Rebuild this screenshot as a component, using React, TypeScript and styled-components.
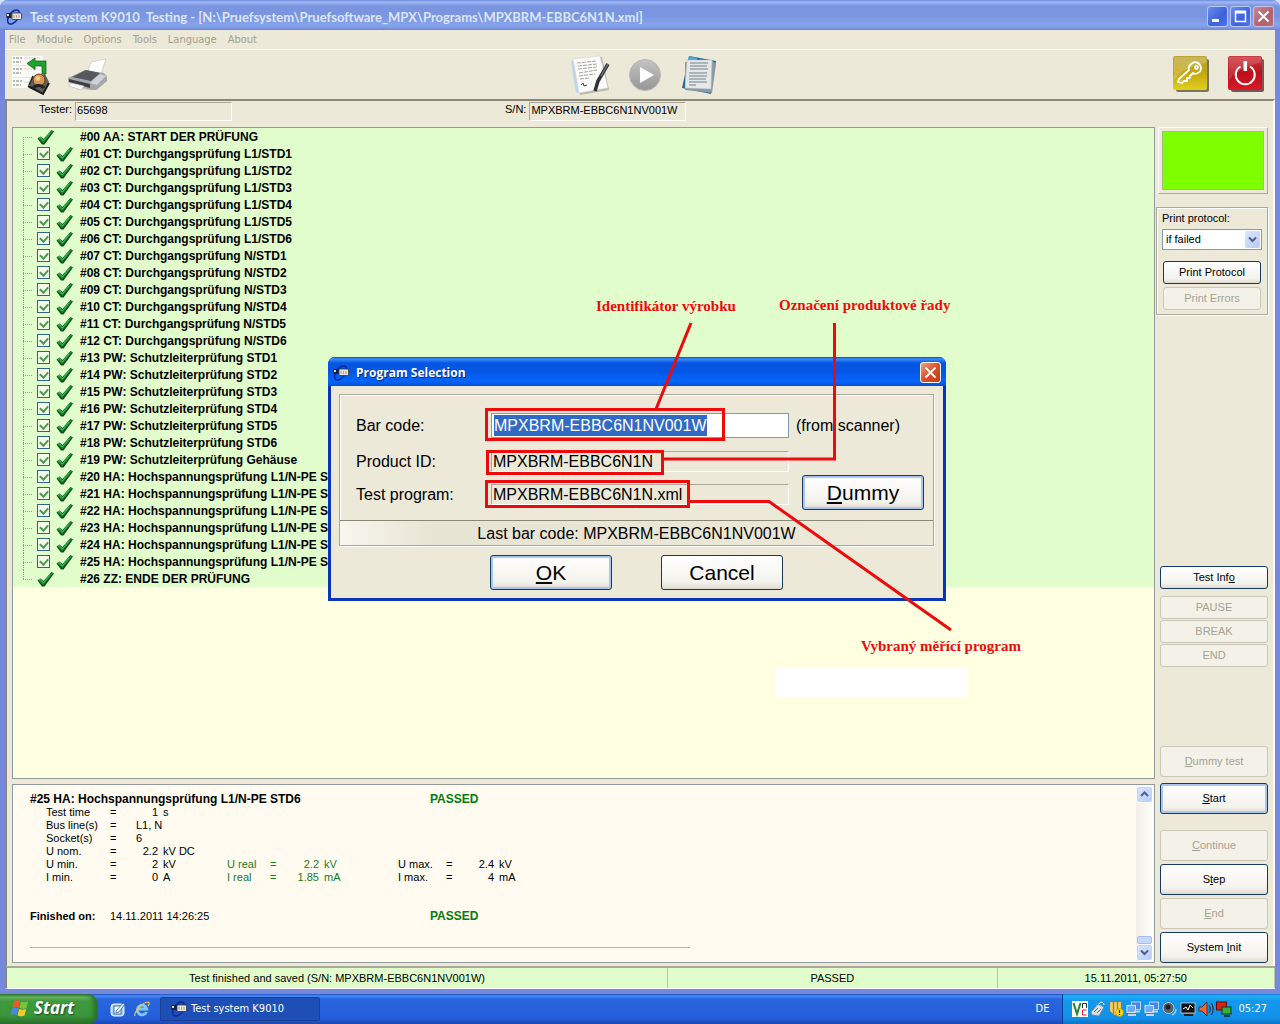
import React from "react";
import styled, { createGlobalStyle, css } from "styled-components";

const sans = `"Liberation Sans", Arial, sans-serif`;
const tahoma = `"DejaVu Sans Condensed", "DejaVu Sans", Tahoma, sans-serif`;
const trebuchet = `"Open Sans", "Noto Sans", sans-serif`;

const GlobalStyle = createGlobalStyle`
  * { box-sizing: border-box; }
  body { margin: 0; background: #ece9d8; font: 11px/13px ${sans}; color: #000; }
  button, input, select { font: inherit; color: inherit; margin: 0; }
`;

/* ---------- shell ---------- */

const Screen = styled.div`
  position: relative;
  display: flex;
  flex-direction: column;
  min-height: 100vh;
  background: #d5e0f5;
`;

const AppWindow = styled.main`
  flex: 1;
  display: flex;
  flex-direction: column;
  border: solid #7489dc;
  border-width: 0 5px 5px;
  border-radius: 8px 8px 0 0;
  background: #ece9d8;
`;

const TitleBar = styled.header`
  display: flex;
  align-items: center;
  height: 30px;
  margin: 0 -5px;
  padding: 3px 6px 0;
  border-radius: 8px 8px 0 0;
  background: linear-gradient(#6c8ce0 0, #a0b8f4 2px, #7b96e0 6px, #7a95e0 16px, #86a4ec 25px, #7c97e4 28px, #6d83d4 30px);
`;

const Title = styled.h1`
  flex: 1;
  margin: 0 0 0 8px;
  font: 700 13px/18px Lato, ${trebuchet};
  color: #dbe5fb;
  white-space: pre;
`;

const CaptionButtons = styled.div`
  display: flex;
  gap: 2px;
`;

const CaptionButton = styled.button<{ $tone: "dim" | "dimRed" | "red" }>`
  display: grid;
  place-items: center;
  width: 21px;
  height: 21px;
  padding: 0;
  border: 1px solid #fff;
  border-radius: 3px;
  ${(p) =>
    p.$tone === "dim" &&
    css`
      border-color: #b9c8f2;
      background: linear-gradient(135deg, #6d8bea, #3c62dc 60%, #4c74ee);
    `}
  ${(p) =>
    p.$tone === "dimRed" &&
    css`
      border-color: #c9c2e6;
      background: linear-gradient(135deg, #c48a96, #b2606c 60%, #b96d78);
    `}
  ${(p) =>
    p.$tone === "red" &&
    css`
      background: linear-gradient(135deg, #f0a184, #dc4f2c 50%, #c43a14);
    `}
`;

const MenuBar = styled.nav`
  display: flex;
  gap: 11px;
  height: 20px;
  padding: 3px 4px 0;
  border-bottom: 1px solid #fff;
`;

const MenuItem = styled.a`
  font: 11px/13px ${tahoma};
  color: #a39f8e;
  text-decoration: none;
`;

const Toolbar = styled.div`
  display: grid;
  grid-template-columns: 1fr auto 1fr;
  align-items: center;
  height: 49px;
  padding: 0 10px 0 6px;
`;

const ToolGroup = styled.div<{ $gap: number; $align?: "center" | "end" }>`
  display: flex;
  align-items: center;
  justify-content: ${(p) => (p.$align === "end" ? "flex-end" : "flex-start")};
  gap: ${(p) => p.$gap}px;
  padding-left: ${(p) => (p.$align === "center" ? 12 : 0)}px;
`;

const ToolButton = styled.button`
  display: block;
  padding: 0;
  border: 0;
  background: none;
  svg { display: block; }
`;

const Client = styled.div`
  flex: 1;
  display: flex;
  flex-direction: column;
  border: solid #8a8776;
  border-width: 2px 0 0 2px;
  border-right: 2px solid #fff;
`;

const InfoRow = styled.div`
  display: grid;
  grid-template-columns: 466px 1fr;
  height: 26px;
  padding: 1px 0 0 32px;
`;

const InfoField = styled.label`
  display: flex;
  gap: 3px;
  line-height: 15px;
`;

const ReadOnly = styled.input<{ $width: string; $compact?: boolean }>`
  width: ${(p) => p.$width};
  height: ${(p) => (p.$compact ? 19 : 21)}px;
  padding: 0 0 ${(p) => (p.$compact ? 3 : 0)}px 1px;
  border: 1px solid;
  border-color: #aca899 #fff #fff #aca899;
  background: transparent;
  outline: 0;
`;

const Body = styled.div`
  flex: 1;
  display: flex;
  gap: 1px;
  padding: 0 5px 3px;
`;

const LeftColumn = styled.div`
  flex: 1;
  min-width: 0;
  display: flex;
  flex-direction: column;
  gap: 5px;
`;

const TreePanel = styled.section`
  flex: 1;
  border: 1px solid #919b9c;
  background: #ffffe1;
`;

const Tree = styled.ul`
  margin: 0;
  padding: 0;
  list-style: none;
  background: #e1fdcb;
`;

const TreeRow = styled.li`
  display: flex;
  align-items: center;
  height: 17px;
  padding-left: 10px;
`;

const StepLabel = styled.span`
  padding-top: 2px;
  font: 700 12px/15px ${sans};
  white-space: pre;
`;

const Branch = styled.svg`
  flex: none;
  width: 14px;
  height: 17px;
`;

const CheckSlot = styled.span`
  flex: none;
  display: flex;
  align-items: center;
  gap: 6px;
  width: 43px;
`;

const TickBox = styled.input`
  appearance: none;
  display: grid;
  place-items: center;
  width: 13px;
  height: 13px;
  border: 1px solid #33638c;
  background: #f2f8ea;
  &:checked::after {
    content: "";
    width: 4px;
    height: 6px;
    margin-bottom: 2px;
    border: solid #4a9a4a;
    border-width: 0 2px 2px 0;
    transform: rotate(42deg);
  }
`;

const LogPanel = styled.section`
  display: flex;
  height: 179px;
  border: 1px solid #919b9c;
  background: #fffbf0;
`;

const LogText = styled.div`
  flex: 1;
  padding: 8px 17px 0;
`;

const LogHeading = styled.div<{ $spaced?: boolean }>`
  display: grid;
  grid-template-columns: 80px 320px 1fr;
  margin-top: ${(p) => (p.$spaced ? 26 : 0)}px;
  line-height: 13px;
`;

const LogTitle = styled.strong<{ $span?: boolean; $pass?: boolean }>`
  grid-column: ${(p) => (p.$span ? "span 2" : "auto")};
  font-size: ${(p) => (p.$span || p.$pass ? 12 : 11)}px;
  color: ${(p) => (p.$pass ? "#0a7a0a" : "#000")};
  white-space: nowrap;
`;

const LogTable = styled.table`
  margin-left: 16px;
  width: 500px;
  table-layout: fixed;
  border-collapse: collapse;
`;

const Cell = styled.td<{ $right?: boolean; $unit?: boolean; $green?: boolean }>`
  padding: 0 0 0 ${(p) => (p.$unit ? 5 : 0)}px;
  height: 13px;
  line-height: 13px;
  text-align: ${(p) => (p.$right ? "right" : "left")};
  color: ${(p) => (p.$green ? "#1d7a1d" : "#000")};
  white-space: nowrap;
`;

const Rule = styled.hr`
  width: 660px;
  max-width: 100%;
  margin: 24px 0 0;
  border: 0;
  border-top: 1px solid #b8b4a8;
`;

const ScrollBar = styled.div`
  display: flex;
  flex-direction: column;
  width: 17px;
  margin: 1px;
  background: linear-gradient(90deg, #f0eee6, #fefefb);
`;

const ScrollButton = styled.button`
  display: grid;
  place-items: center;
  height: 17px;
  padding: 0;
  border: 1px solid #fff;
  border-radius: 3px;
  background: linear-gradient(135deg, #dbe6fe, #b6caf8);
  box-shadow: inset 0 0 0 1px #c3d3fd;
`;

const ScrollThumb = styled.div`
  height: 8px;
  margin: auto 1px 0;
  border: 1px solid #a9bdf0;
  border-radius: 2px;
  background: #c6d6fc;
`;

/* ---------- right column ---------- */

const SideColumn = styled.aside`
  display: flex;
  flex-direction: column;
  width: 112px;
`;

const LampFrame = styled.div`
  height: 67px;
  margin-left: 2px;
  padding: 3px;
  border: 1px solid;
  border-color: #fff #aca899 #aca899 #fff;
`;

const Lamp = styled.div`
  height: 100%;
  border: 1px solid #9fbf7a;
  background: #7dff00;
`;

const PrintGroup = styled.fieldset`
  display: flex;
  flex-direction: column;
  margin: 13px 0 0;
  padding: 4px 5px;
  border: 1px solid #aca899;
  box-shadow: inset 1px 1px #fff, 1px 1px #fff;
  min-width: 0;
`;

const SelectWrap = styled.div`
  position: relative;
  margin: 4px 0 11px;
`;

const Select = styled.select`
  appearance: none;
  display: block;
  width: 100%;
  height: 21px;
  padding: 0 3px;
  border: 1px solid #7f9db9;
  border-radius: 0;
  background: #fff;
`;

const SelectArrow = styled.span`
  position: absolute;
  top: 2px;
  right: 2px;
  bottom: 2px;
  width: 15px;
  display: grid;
  place-items: center;
  border-radius: 2px;
  background: linear-gradient(135deg, #dbe6fe, #b6caf8);
  pointer-events: none;
`;

const Button = styled.button<{ $height: number; $focus?: boolean; $large?: boolean }>`
  height: ${(p) => p.$height}px;
  padding: 0;
  border: 1px solid #163a5f;
  border-radius: 3px;
  background: linear-gradient(#fff, #f3f2ec 80%, #dedad0);
  white-space: nowrap;
  ${(p) =>
    p.$focus &&
    css`
      box-shadow: inset 0 0 0 2px #a9c5f2;
    `}
  ${(p) =>
    p.$large &&
    css`
      width: 122px;
      font-size: 21px;
    `}
  &:disabled {
    border-color: #cbc8b9;
    background: #f4f2e8;
    color: #a5a293;
  }
`;

const Stack = styled.div<{ $gap: number; $top?: number | "auto"; $bottom?: number; $inset?: string }>`
  display: flex;
  flex-direction: column;
  gap: ${(p) => p.$gap}px;
  margin-top: ${(p) => (p.$top === "auto" ? "auto" : `${p.$top ?? 0}px`)};
  margin-bottom: ${(p) => p.$bottom ?? 0}px;
  padding: ${(p) => p.$inset ?? "0"};
`;

const StatusBar = styled.footer`
  display: grid;
  grid-template-columns: 660fr 329fr 277fr;
  height: 23px;
  border-top: 2px solid #aca899;
  border-left: 2px solid #8a8776;
  border-bottom: 1px solid #fff;
`;

const StatusCell = styled.div`
  border-right: 1px solid #b5c9a2;
  background: #e1fdcb;
  line-height: 20px;
  text-align: center;
`;

/* ---------- taskbar ---------- */

const Taskbar = styled.nav`
  display: flex;
  height: 30px;
  background: linear-gradient(#1f4fc0 0, #4a8cf6 2px, #2a66e0 5px, #245edb 24px, #1c48b4 30px);
  color: #fff;
  font: 11px/14px ${tahoma};
`;

const StartButton = styled.button`
  display: flex;
  align-items: center;
  gap: 4px;
  width: 98px;
  padding: 0 0 2px 10px;
  border: 0;
  border-radius: 0 10px 10px 0;
  background: linear-gradient(#2f7a2d 0, #6cb866 3px, #3f9a3d 7px, #3a943a 22px, #2a702a 30px);
  box-shadow: inset -4px 0 5px #2a6f2a;
  color: #fff;
  font: italic 700 17px/22px ${trebuchet};
  text-shadow: 1px 1px 2px #1c4a1c;
`;

const QuickLaunch = styled.div`
  display: flex;
  align-items: center;
  gap: 8px;
  width: 62px;
  padding-left: 12px;
`;

const TaskButton = styled.button`
  display: flex;
  align-items: center;
  gap: 4px;
  width: 160px;
  margin: 3px auto 3px 0;
  padding: 0 10px;
  border: 1px solid #173f94;
  border-radius: 2px;
  background: #1e4fb6;
  color: #fff;
`;

const Language = styled.span`
  padding: 8px 13px 0;
`;

const Tray = styled.div`
  display: flex;
  align-items: center;
  gap: 2px;
  padding: 0 13px 0 9px;
  border-left: 1px solid #0d3c94;
  background: linear-gradient(#1478d8 0, #22b0f4 2px, #129aee 6px, #1290e8 24px, #0f72c4 30px);
`;

const Clock = styled.time`
  margin-left: 4px;
`;

/* ---------- dialog ---------- */

const Dialog = styled.section`
  position: absolute;
  top: 357px;
  left: 328px;
  width: 618px;
  border: solid #0a35b8;
  border-width: 0 3px 3px;
  border-radius: 7px 7px 0 0;
  background: #ece9d8;
`;

const DialogTitle = styled.header`
  display: flex;
  align-items: center;
  height: 29px;
  margin: 0 -3px;
  padding: 2px 5px 0;
  border-radius: 7px 7px 0 0;
  background: linear-gradient(#0a48cc 0, #3c8cff 2px, #0657e0 6px, #0455e4 14px, #0364fc 24px, #0450d8 29px);
`;

const DialogName = styled.h2`
  flex: 1;
  margin: 0 0 0 7px;
  font: 700 12px/16px ${trebuchet};
  color: #fff;
  text-shadow: 1px 1px #0a2a80;
`;

const DialogBody = styled.form`
  padding: 8px 9px 8px 8px;
  font: 16px/20px ${sans};
`;

const GroupFrame = styled.div`
  border: 1px solid #aca899;
  box-shadow: 1px 1px #fff, inset 1px 1px #fff;
`;

const Fields = styled.div`
  display: flex;
  gap: 7px;
  padding: 17px 9px 10px 16px;
`;

const FieldGrid = styled.div`
  display: grid;
  grid-template-columns: 135px 298px;
  grid-template-rows: 27px 21px 21px;
  row-gap: 12px;
  align-items: center;
  padding-bottom: 5px;
`;

const BarCode = styled.div`
  height: 25px;
  padding: 1px 2px;
  border: 1px solid #7f9db9;
  background: #fff;
`;

const BarCodeInput = styled.input`
  display: block;
  width: 213px;
  height: 21px;
  padding: 0;
  border: 0;
  outline: 0;
  background: #316ac5;
  color: #fff;
`;

const FieldSide = styled.div`
  flex: 1;
  display: flex;
  flex-direction: column;
  justify-content: space-between;
  align-items: flex-end;
`;

const Hint = styled.span`
  align-self: flex-start;
  line-height: 27px;
`;

const LastCode = styled.div`
  height: 25px;
  border-top: 1px solid #8a8776;
  background: linear-gradient(90deg, #f8f6ee, #e8e4d3 16%, #ece9d8);
  line-height: 25px;
  text-align: center;
`;

const DialogActions = styled.div`
  display: flex;
  justify-content: center;
  gap: 49px;
  padding-top: 9px;
`;

/* ---------- annotations ---------- */

const Callouts = styled.svg`
  position: absolute;
  top: 0;
  left: 0;
  pointer-events: none;
`;

const Note = styled.p<{ $x: number; $y: number }>`
  position: absolute;
  left: ${(p) => p.$x}px;
  top: ${(p) => p.$y}px;
  margin: 0;
  font: 700 15px/18px "Liberation Serif", "Times New Roman", serif;
  color: #ee0a0a;
  white-space: nowrap;
`;

const Patch = styled.div`
  position: absolute;
  left: 776px;
  top: 667px;
  width: 192px;
  height: 30px;
  background: #fff;
`;

/* ---------- icons ---------- */

const AppIcon = () => (
  <svg width="16" height="16" viewBox="0 0 16 16" aria-hidden="true">
    <ellipse cx="7.500" cy="8" rx="8" ry="4.500" fill="none" stroke="#0a2a9c" strokeWidth="1.500" transform="rotate(-55 7.500 8)" />
    <rect x="0.500" y="4" width="5" height="5" fill="#222" />
    <path d="M1 5h2v2H1z" fill="#ddd" />
    <rect x="6" y="4" width="9.500" height="6.500" rx="1" fill="#e9e4da" stroke="#333" strokeWidth="0.800" />
    <path d="M8 6v3M10.500 6v3M13 6v3" stroke="#b99" strokeWidth="1" />
  </svg>
);

const Tick = () => (
  <svg width="18" height="16" viewBox="0 0 18 16" aria-hidden="true">
    <path d="M0.500 9.500L3.500 7.500 6.500 10 14.500 1 17 2.500 7.500 15.500 5 15.500z" fill="#0b4f16" />
    <path d="M1 9L3.500 7.800 6.300 11 14.500 1.500 16 2.300 6.300 14z" fill="#1c9232" />
    <path d="M2 9L3.500 8.500 6.300 12 13 4" fill="none" stroke="#43c45a" strokeWidth="0.900" />
  </svg>
);

const Chevron = ({ up }: { up?: boolean }) => (
  <svg width="9" height="7" viewBox="0 0 9 7" aria-hidden="true">
    <path d={up ? "M1 5l3.500-3.500L8 5" : "M1 1.500L4.500 5 8 1.500"} fill="none" stroke="#4d6185" strokeWidth="2" />
  </svg>
);

const CloseGlyph = () => (
  <svg width="13" height="13" viewBox="0 0 13 13" aria-hidden="true">
    <path d="M1.500 1.500l10 10M11.500 1.500l-10 10" stroke="#fff" strokeWidth="2" />
  </svg>
);

const LogoutIcon = () => (
  <svg width="40" height="42" viewBox="0 0 40 42" aria-hidden="true">
    <path d="M1 2h31v32H1z" fill="#fbfbf6" />
    <path d="M2 4h9M2 8h8M2 15h9M2 19h8M2 27h9M2 31h8" stroke="#a6a6a2" strokeWidth="1.500" strokeDasharray="2 1 3 1" />
    <path d="M13 4h16M13 15h12M13 28h8" stroke="#e2e2de" strokeWidth="1.500" />
    <path d="M2 11.500h28M2 23.500h26" stroke="#e4e4e0" />
    <path d="M16 9.500l8-5.500v3h11v13h-4v-8h-7v3.500z" fill="#1fa42c" stroke="#0a5a14" strokeWidth="0.700" />
    <path d="M21 23l13-3 4 8-6 12-14-6z" fill="#5e5e5c" />
    <path d="M17 32l15 8 6-11" fill="none" stroke="#1b1b1b" strokeWidth="2" />
    <path d="M22 22l-4 9" stroke="#222" strokeWidth="1.500" />
    <circle cx="28" cy="26" r="6" fill="#d9954c" stroke="#6a4119" />
    <path d="M22 35c1-4 8-5 11-1" stroke="#222" strokeWidth="3" fill="none" />
    <circle cx="27" cy="24.500" r="2.500" fill="#f3c794" />
  </svg>
);

const PrinterIcon = () => (
  <svg width="42" height="36" viewBox="0 0 42 36" aria-hidden="true">
    <path d="M8 32l22 1 10-9v-6L22 27z" fill="#b9b5a6" opacity="0.600" />
    <path d="M21 14L24 5l15-3-5 15z" fill="#fff" stroke="#c4c4c4" strokeWidth="0.700" />
    <path d="M1 21l17-8 19 3 3 4v4l-11 9-6 0L1 25z" fill="#a4a7ab" />
    <path d="M5 20l14-7 14 3-9 8z" fill="#55585c" />
    <path d="M23 26l10-9 6 2-9 9z" fill="#d0d3d6" />
    <path d="M2 22l21 5v4L2 25z" fill="#3c3e42" />
    <path d="M4 26l13 3-3 4-12-4z" fill="#fafafa" stroke="#bbb" strokeWidth="0.600" />
  </svg>
);

const EditDocIcon = () => (
  <svg width="40" height="40" viewBox="0 0 40 40" aria-hidden="true">
    <path d="M4 6l28-4 7 33-29 5z" fill="#a8a494" opacity="0.700" />
    <path d="M1 6l5-1 4 32-4 1z" fill="#bcd6ea" />
    <path d="M3 4l27-3 8 32-29 5z" fill="#fbfbfa" stroke="#ccc" strokeWidth="0.500" />
    <path d="M7 8l19-2M8 11l19-2M8 14l19-2M9 18l18-3M9 21l16-2M10 24l10-1" stroke="#a2a2a2" strokeWidth="1" strokeDasharray="4 1" />
    <path d="M11 30l2-2 1 3 3-1" stroke="#444" fill="none" />
    <path d="M38 9L28 26l-3 10" fill="none" stroke="#30343a" strokeWidth="3.500" />
    <path d="M38 9l-7 12" stroke="#777d86" strokeWidth="1.200" />
  </svg>
);

const PlayIcon = () => (
  <svg width="32" height="32" viewBox="0 0 32 32" aria-hidden="true">
    <defs>
      <linearGradient id="play" x1="0" y1="0" x2="0" y2="1">
        <stop offset="0" stopColor="#c4c4c4" />
        <stop offset="1" stopColor="#959595" />
      </linearGradient>
    </defs>
    <circle cx="16" cy="16" r="15.500" fill="url(#play)" stroke="#b8b8b4" />
    <path d="M11 8v16l14-8z" fill="#fff" />
  </svg>
);

const DocsIcon = () => (
  <svg width="38" height="40" viewBox="0 0 38 40" aria-hidden="true">
    <path d="M9 1l27 5-5 33-29-6z" fill="#1d6a92" />
    <path d="M9 1l8 2-1 5-8-1z" fill="#4fa6cc" />
    <path d="M5 7l28-1 3 3-4 29-27-3z" fill="#8b9aa2" />
    <path d="M7 5h25l-1 29-26-1z" fill="#e4e8ea" stroke="#bbb" strokeWidth="0.500" />
    <path d="M10 8h18M10 11h17M10 14h18M9 18h18M9 21h18M9 24h17M9 27h18M9 30h7" stroke="#98a2a8" strokeWidth="1.300" />
  </svg>
);

const KeyIcon = () => (
  <svg width="37" height="37" viewBox="0 0 37 37" aria-hidden="true">
    <defs>
      <linearGradient id="key" x1="0" y1="0" x2="0" y2="1">
        <stop offset="0" stopColor="#b9a436" />
        <stop offset="0.500" stopColor="#c4a80e" />
        <stop offset="1" stopColor="#e0cf20" />
      </linearGradient>
    </defs>
    <rect x="3" y="3" width="33" height="33" rx="2" fill="#7a765e" />
    <rect width="34" height="34" rx="2" fill="url(#key)" />
    <path d="M1 1h32v6C22 8 8 14 1 24z" fill="#fff" opacity="0.200" />
    <g fill="none" stroke="#fff" strokeWidth="1.800" strokeLinejoin="round">
      <path d="M18 8c3-3 7-2 9 1s1 7-2 8c-2 1-4 1-5 0l-3 3v2h-3v3h-3l-2 2-4-1 1-3 10-9c-1-2 0-4 2-6z" />
      <circle cx="23.500" cy="11.500" r="1.500" />
    </g>
  </svg>
);

const PowerIcon = () => (
  <svg width="37" height="37" viewBox="0 0 37 37" aria-hidden="true">
    <defs>
      <linearGradient id="pow" x1="0" y1="0" x2="0" y2="1">
        <stop offset="0" stopColor="#cc3b44" />
        <stop offset="0.500" stopColor="#bd0f1b" />
        <stop offset="1" stopColor="#d81a26" />
      </linearGradient>
    </defs>
    <rect x="3" y="3" width="33" height="33" rx="2" fill="#76565a" />
    <rect width="34" height="34" rx="2" fill="url(#pow)" />
    <path d="M1 1h32v6C22 8 8 14 1 24z" fill="#fff" opacity="0.150" />
    <path d="M12.500 10.500a9.500 9.500 0 1 0 9.500 0" fill="none" stroke="#fff" strokeWidth="2" />
    <path d="M17.300 5v10" stroke="#fff" strokeWidth="3.500" />
  </svg>
);

const FlagIcon = () => (
  <svg width="20" height="18" viewBox="0 0 20 18" aria-hidden="true">
    <path d="M4 2c2-1 4-1 6 0L8.500 8.500c-2-1-4-1-6 0z" fill="#ee5a26" />
    <path d="M11 2.500c2 1 4 1 7 0L16.500 9c-2 1-5 1-7 0z" fill="#7cc23a" />
    <path d="M2.200 9.500c2-1 4-1 6 0L6.500 16c-2-1-4-1-6 0z" fill="#4a86e8" />
    <path d="M9.200 10c2 1 4 1 7 0L14.500 16.500c-2 1-5 1-7 0z" fill="#f8c82a" />
  </svg>
);

const DesktopIcon = () => (
  <svg width="16" height="16" viewBox="0 0 16 16" aria-hidden="true">
    <rect x="1" y="3" width="13" height="12" rx="3" fill="#a9d5f2" stroke="#e7f4fd" />
    <rect x="4" y="5" width="7" height="8" fill="#fff" stroke="#3b6ea8" />
    <path d="M6 10l7-8 2 1-6 8-3 1z" fill="#dceefa" stroke="#2d5c98" strokeWidth="0.700" />
  </svg>
);

const IeIcon = () => (
  <svg width="16" height="16" viewBox="0 0 16 16" aria-hidden="true">
    <path d="M12.500 11a4.800 4.800 0 1 1 .3-3H4" fill="none" stroke="#7cc8fc" strokeWidth="2.800" />
    <path d="M1 15C-.5 11 9 1 14 1c2 .5 1 3 0 4" fill="none" stroke="#f2c34a" strokeWidth="1.200" />
  </svg>
);

const trayShapes: Record<string, React.ReactNode> = {
  mouse: (
    <>
      <path d="M1 11l7-8 6 3-5 9-7-1z" fill="#d8dce0" stroke="#6c7a88" strokeWidth="0.700" />
      <path d="M4 11l4-4M7 12l4-4" stroke="#5d6c7c" />
      <path d="M9 3c1-3 5-2 5 1" fill="none" stroke="#fff" />
    </>
  ),
  shield: (
    <>
      <path d="M2 1h3v12L2 10zM6 1h3v13H6zM10 1h3v8h-3z" fill="#f6d36a" stroke="#b98b1c" strokeWidth="0.500" />
      <circle cx="11.500" cy="11.500" r="4" fill="#ffd91c" stroke="#a88400" strokeWidth="0.600" />
      <path d="M11.500 9v3M11.500 13v1" stroke="#222" strokeWidth="1.200" />
    </>
  ),
  net: (
    <>
      <rect x="5.500" y="1" width="9" height="7.500" fill="#4a86e4" stroke="#b8d4f4" />
      <rect x="1" y="4.500" width="8.500" height="7" fill="#6eaaf6" stroke="#d4e6fa" />
      <path d="M2 14h8M8 10.500h6" stroke="#c8d4e2" strokeWidth="2" />
    </>
  ),
  speaker: (
    <>
      <circle cx="6.500" cy="7" r="5.500" fill="#5a6068" stroke="#bfc6cc" />
      <circle cx="6" cy="6" r="2.500" fill="#222" />
      <path d="M10 14c2-1 4-3 4-6" fill="none" stroke="#9cc8f4" strokeWidth="1.500" />
    </>
  ),
  monitor: (
    <>
      <rect x="1" y="2" width="14" height="10" fill="#111" stroke="#ccc" strokeWidth="0.800" />
      <path d="M3 8l3-2 2 3 2-5 3 3" stroke="#fff" fill="none" />
      <path d="M4 14h9" stroke="#222" strokeWidth="2" />
    </>
  ),
  sound: (
    <>
      <path d="M1 6h3l5-5v14l-5-5H1z" fill="#e8673a" stroke="#5a1a08" strokeWidth="0.800" />
      <path d="M11 4c1.500 2 1.500 6 0 8M13.500 2c2 3 2 9 0 12" stroke="#3a1a10" fill="none" />
    </>
  ),
  screens: (
    <>
      <rect x="0.500" y="1" width="10" height="8" fill="#d8231c" stroke="#5c0c08" />
      <rect x="6" y="6" width="9" height="7" fill="#3cae3c" stroke="#0f3c0f" />
      <path d="M8 15h6" stroke="#222" strokeWidth="1.500" />
    </>
  ),
};

const TrayIcon = ({ name }: { name: string }) => (
  <svg width="16" height="16" viewBox="0 0 16 16" aria-hidden="true">
    {trayShapes[name]}
  </svg>
);

const VncIcon = () => (
  <svg width="16" height="16" viewBox="0 0 16 16" aria-hidden="true">
    <rect width="16" height="16" fill="#fff" />
    <path d="M1.500 2L5 13 8.500 2" fill="none" stroke="#1c8a2c" strokeWidth="2" />
    <path d="M10.500 7V2.500h4V7" fill="none" stroke="#333" />
    <path d="M14.500 9h-4v5h4" fill="none" stroke="#d02020" />
  </svg>
);

/* ---------- data ---------- */

const pad = (n: number) => String(n).padStart(2, "0");

const steps: string[] = [
  "AA: START DER PRÜFUNG",
  ...[1, 2, 3, 4, 5, 6].map((n) => `CT: Durchgangsprüfung L1/STD${n}`),
  ...[1, 2, 3, 4, 5, 6].map((n) => `CT: Durchgangsprüfung N/STD${n}`),
  ...[1, 2, 3, 4, 5, 6].map((n) => `PW: Schutzleiterprüfung STD${n}`),
  "PW: Schutzleiterprüfung Gehäuse",
  ...[1, 2, 3, 4, 5, 6].map((n) => `HA: Hochspannungsprüfung L1/N-PE STD${n}`),
  "ZZ: ENDE DER PRÜFUNG",
];

const logColumns = [64, 26, 22, 69, 43, 15, 34, 79, 48, 20, 28, 52];

const limits = [
  ["U min.", "2", "kV", "U real", "2.2", "kV", "U max.", "2.4", "kV"],
  ["I min.", "0", "A", "I real", "1.85", "mA", "I max.", "4", "mA"],
];

const trayIcons = ["mouse", "shield", "net", "net", "speaker", "monitor", "sound", "screens"];

const StepRow = ({ index, label }: { index: number; label: string }) => {
  const first = index === 0;
  const last = index === steps.length - 1;
  const id = `step-${index}`;
  const hasBox = !first && !last;
  return (
    <TreeRow>
      <Branch aria-hidden="true">
        <path
          d={`M0.500 ${first ? 9 : 0}V${last ? 9 : 17}M0 9.500H9`}
          fill="none"
          stroke="#9a9a8a"
          strokeDasharray="1 1"
        />
      </Branch>
      <CheckSlot>
        {hasBox && <TickBox id={id} type="checkbox" defaultChecked />}
        <Tick />
      </CheckSlot>
      <StepLabel as={hasBox ? "label" : "span"} {...(hasBox ? { htmlFor: id } : {})}>
        {`#${pad(index)} ${label}`}
      </StepLabel>
    </TreeRow>
  );
};

const App = () => (
  <>
    <GlobalStyle />
    <Screen>
      <AppWindow>
        <TitleBar>
          <AppIcon />
          <Title>{"Test system K9010  Testing - [N:\\Pruefsystem\\Pruefsoftware_MPX\\Programs\\MPXBRM-EBBC6N1N.xml]"}</Title>
          <CaptionButtons>
            <CaptionButton $tone="dim" aria-label="Minimize">
              <svg width="13" height="13" viewBox="0 0 13 13"><path d="M1 10.500h7" stroke="#fff" strokeWidth="3" /></svg>
            </CaptionButton>
            <CaptionButton $tone="dim" aria-label="Maximize">
              <svg width="13" height="13" viewBox="0 0 13 13"><path d="M1.500 1v10.500h10V1M1 2h11" fill="none" stroke="#fff" strokeWidth="1.500" /><path d="M1 2h11" stroke="#fff" strokeWidth="3" /></svg>
            </CaptionButton>
            <CaptionButton $tone="dimRed" aria-label="Close"><CloseGlyph /></CaptionButton>
          </CaptionButtons>
        </TitleBar>

        <MenuBar>
          {["File", "Module", "Options", "Tools", "Language", "About"].map((m) => (
            <MenuItem key={m} href="#">{m}</MenuItem>
          ))}
        </MenuBar>

        <Toolbar>
          <ToolGroup $gap={16}>
            <ToolButton aria-label="Log out"><LogoutIcon /></ToolButton>
            <ToolButton aria-label="Print"><PrinterIcon /></ToolButton>
          </ToolGroup>
          <ToolGroup $gap={19} $align="center">
            <ToolButton aria-label="Edit program"><EditDocIcon /></ToolButton>
            <ToolButton aria-label="Run"><PlayIcon /></ToolButton>
            <ToolButton aria-label="Protocols"><DocsIcon /></ToolButton>
          </ToolGroup>
          <ToolGroup $gap={18} $align="end">
            <ToolButton aria-label="Key"><KeyIcon /></ToolButton>
            <ToolButton aria-label="Exit"><PowerIcon /></ToolButton>
          </ToolGroup>
        </Toolbar>

        <Client>
          <InfoRow>
            <InfoField>
              Tester:
              <ReadOnly $width="157px" $compact readOnly defaultValue="65698" />
            </InfoField>
            <InfoField>
              S/N:
              <ReadOnly $width="157px" $compact readOnly defaultValue="MPXBRM-EBBC6N1NV001W" />
            </InfoField>
          </InfoRow>

          <Body>
            <LeftColumn>
              <TreePanel>
                <Tree>
                  {steps.map((label, i) => (
                    <StepRow key={label} index={i} label={label} />
                  ))}
                </Tree>
              </TreePanel>

              <LogPanel>
                <LogText>
                  <LogHeading>
                    <LogTitle $span>#25 HA: Hochspannungsprüfung L1/N-PE STD6</LogTitle>
                    <LogTitle $pass>PASSED</LogTitle>
                  </LogHeading>
                  <LogTable>
                    <colgroup>
                      {logColumns.map((w, i) => (
                        <col key={i} width={w} />
                      ))}
                    </colgroup>
                    <tbody>
                      <tr>
                        <Cell>Test time</Cell><Cell>=</Cell><Cell $right>1</Cell><Cell $unit>s</Cell>
                      </tr>
                      <tr>
                        <Cell>Bus line(s)</Cell><Cell>=</Cell><Cell colSpan={2}>L1, N</Cell>
                      </tr>
                      <tr>
                        <Cell>Socket(s)</Cell><Cell>=</Cell><Cell colSpan={2}>6</Cell>
                      </tr>
                      <tr>
                        <Cell>U nom.</Cell><Cell>=</Cell><Cell $right>2.2</Cell><Cell $unit>kV DC</Cell>
                      </tr>
                      {limits.map((r) => (
                        <tr key={r[0]}>
                          {[0, 3, 6].map((k) => (
                            <React.Fragment key={k}>
                              <Cell $green={k === 3}>{r[k]}</Cell>
                              <Cell $green={k === 3}>=</Cell>
                              <Cell $right $green={k === 3}>{r[k + 1]}</Cell>
                              <Cell $unit $green={k === 3}>{r[k + 2]}</Cell>
                            </React.Fragment>
                          ))}
                        </tr>
                      ))}
                    </tbody>
                  </LogTable>
                  <LogHeading $spaced>
                    <LogTitle>Finished on:</LogTitle>
                    <span>14.11.2011 14:26:25</span>
                    <LogTitle $pass>PASSED</LogTitle>
                  </LogHeading>
                  <Rule />
                </LogText>
                <ScrollBar>
                  <ScrollButton aria-label="Scroll up"><Chevron up /></ScrollButton>
                  <ScrollThumb />
                  <ScrollButton aria-label="Scroll down"><Chevron /></ScrollButton>
                </ScrollBar>
              </LogPanel>
            </LeftColumn>

            <SideColumn>
              <LampFrame><Lamp /></LampFrame>
              <PrintGroup>
                <label htmlFor="protocol">Print protocol:</label>
                <SelectWrap>
                  <Select id="protocol" defaultValue="if failed">
                    <option>if failed</option>
                  </Select>
                  <SelectArrow><Chevron /></SelectArrow>
                </SelectWrap>
                <Stack $gap={3} $inset="0 1px">
                  <Button $height={23}>Print Protocol</Button>
                  <Button $height={23} disabled>Print Errors</Button>
                </Stack>
              </PrintGroup>

              <Stack $gap={7} $top="auto" $bottom={79} $inset="0 0 0 4px">
                <Button $height={23}>Test Inf<u>o</u></Button>
                <Stack $gap={1}>
                  <Button $height={23} disabled>PAUSE</Button>
                  <Button $height={23} disabled>BREAK</Button>
                  <Button $height={23} disabled>END</Button>
                </Stack>
              </Stack>

              <Stack $gap={6} $inset="0 0 0 4px">
                <Button $height={31} disabled><u>D</u>ummy test</Button>
                <Button $height={31} $focus><u>S</u>tart</Button>
              </Stack>
              <Stack $gap={3} $top={16} $inset="0 0 0 4px">
                <Button $height={31} disabled><u>C</u>ontinue</Button>
                <Button $height={31}>S<u>t</u>ep</Button>
                <Button $height={31} disabled><u>E</u>nd</Button>
                <Button $height={31}>System <u>I</u>nit</Button>
              </Stack>
            </SideColumn>
          </Body>
        </Client>

        <StatusBar>
          <StatusCell>Test finished and saved (S/N: MPXBRM-EBBC6N1NV001W)</StatusCell>
          <StatusCell>PASSED</StatusCell>
          <StatusCell>15.11.2011, 05:27:50</StatusCell>
        </StatusBar>
      </AppWindow>

      <Taskbar>
        <StartButton><FlagIcon />Start</StartButton>
        <QuickLaunch><DesktopIcon /><IeIcon /></QuickLaunch>
        <TaskButton><AppIcon />Test system K9010</TaskButton>
        <Language>DE</Language>
        <Tray>
          <VncIcon />
          {trayIcons.map((name, i) => (
            <TrayIcon key={i} name={name} />
          ))}
          <Clock>05:27</Clock>
        </Tray>
      </Taskbar>

      <Dialog role="dialog" aria-labelledby="dialog-name">
        <DialogTitle>
          <AppIcon />
          <DialogName id="dialog-name">Program Selection</DialogName>
          <CaptionButton $tone="red" aria-label="Close dialog"><CloseGlyph /></CaptionButton>
        </DialogTitle>
        <DialogBody onSubmit={(e) => e.preventDefault()}>
          <GroupFrame>
            <Fields>
              <FieldGrid>
                <label htmlFor="barcode">Bar code:</label>
                <BarCode><BarCodeInput id="barcode" defaultValue="MPXBRM-EBBC6N1NV001W" /></BarCode>
                <label htmlFor="product">Product ID:</label>
                <ReadOnly id="product" $width="100%" readOnly defaultValue="MPXBRM-EBBC6N1N" />
                <label htmlFor="program">Test program:</label>
                <ReadOnly id="program" $width="100%" readOnly defaultValue="MPXBRM-EBBC6N1N.xml" />
              </FieldGrid>
              <FieldSide>
                <Hint>(from scanner)</Hint>
                <Button type="button" $height={35} $large $focus><u>D</u>ummy</Button>
              </FieldSide>
            </Fields>
            <LastCode>Last bar code: MPXBRM-EBBC6N1NV001W</LastCode>
          </GroupFrame>
          <DialogActions>
            <Button type="submit" $height={35} $large $focus><u>O</u>K</Button>
            <Button type="button" $height={35} $large>Cancel</Button>
          </DialogActions>
        </DialogBody>
      </Dialog>

      <Patch />
      <Callouts width="1280" height="700" viewBox="0 0 1280 700" fill="none" stroke="#ee0a0a" strokeWidth="3" aria-hidden="true">
        <rect x="486.500" y="409.500" width="237" height="30" />
        <rect x="487.500" y="451.500" width="175" height="22" />
        <rect x="486.500" y="481.500" width="202" height="25" />
        <path d="M691 323L656 409" />
        <path d="M834.500 323V459H663" />
        <path d="M689 501.500H769L951 630" />
      </Callouts>
      <Note $x={596} $y={297}>Identifikátor výrobku</Note>
      <Note $x={779} $y={296}>Označení produktové řady</Note>
      <Note $x={861} $y={637}>Vybraný měřící program</Note>
    </Screen>
  </>
);

export default App;
